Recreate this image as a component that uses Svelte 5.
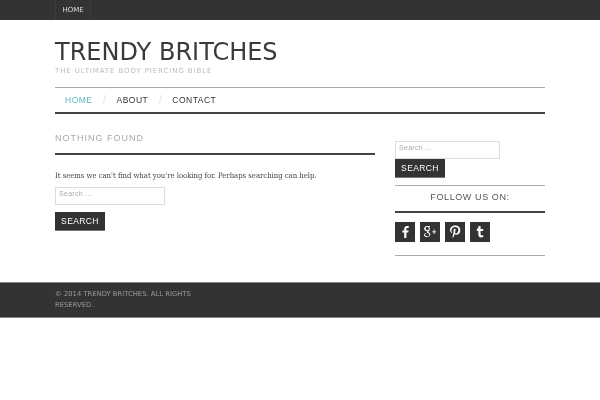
<script>
  const nav = ["Home", "About", "Contact"];
</script>

<div class="page">
  <div class="topbar">
    <div class="wrap">
      <a class="top-link" href="#top">Home</a>
    </div>
  </div>

  <div class="wrap">
    <header class="masthead">
      <h1>Trendy Britches</h1>
      <p class="tagline">The Ultimate Body Piercing Bible</p>
    </header>

    <nav class="mainnav">
      {#each nav as item, i}
        {#if i > 0}<span class="sep">/</span>{/if}
        <a href="#top" class:current={i === 0}>{item}</a>
      {/each}
    </nav>

    <div class="columns">
      <main class="content">
        <h2 class="page-title">Nothing Found</h2>
        <p class="message">It seems we can't find what you're looking for. Perhaps searching can help.</p>
        <form class="search stacked">
          <input type="search" placeholder="Search ..." />
          <button type="button">Search</button>
        </form>
      </main>

      <aside class="sidebar">
        <form class="search">
          <input type="search" placeholder="Search ..." />
          <button type="button">Search</button>
        </form>
        <h3 class="follow">Follow Us On:</h3>
        <div class="social">
          <a href="#top" aria-label="Facebook">
            <svg viewBox="0 0 20 20"><path d="M11.4 16V10.6h1.9l.3-2.2h-2.2V7.1c0-.6.2-1 1.1-1h1.2V4.1c-.3 0-.9-.1-1.7-.1-1.700 0-2.800 1-2.800 2.900v1.500H7.300v2.200h1.900V16z" /></svg>
          </a>
          <a href="#top" aria-label="Google Plus">
            <svg viewBox="0 0 20 20"><path d="M9.900 4H7.200C5.300 4 4.200 5.300 4.200 6.700c0 1.400 1 2.400 2.400 2.400h.4c-.1.300-.2.500-.2.700 0 .4.200.7.400.9-1.600.1-3.200.8-3.200 2.300 0 1.200 1.300 2.100 3 2.100 2 0 3.300-1.300 3.300-2.500 0-1-.5-1.500-1.200-2-.5-.4-.7-.6-.7-.9 0-.7 1.500-1.100 1.500-2.800 0-.8-.3-1.400-.9-1.800h.9zM7.200 4.700c.9 0 1.500.9 1.600 1.900.1.900-.4 1.700-1.300 1.700S5.900 7.400 5.800 6.400c-.1-.9.500-1.700 1.400-1.700zm.3 6.200c1.100.4 1.800.9 1.800 1.800 0 1-.8 1.600-2 1.600-1.400 0-2.300-.7-2.300-1.700s1.100-1.700 2.500-1.700zM13.700 7.600v1.800h-1.800v.9h1.800v1.800h.9v-1.800h1.800v-.9h-1.800V7.600z" /></svg>
          </a>
          <a href="#top" aria-label="Pinterest">
            <svg viewBox="0 0 20 20"><path d="M10.300 3.500C7.400 3.500 5 5.400 5 8c0 1.300.7 2.600 1.800 3 .3.100.4-.3.300-.6-.5-.6-.7-1.200-.7-2 0-1.900 1.600-3.500 3.800-3.500 1.900 0 3.200 1.200 3.200 2.900 0 2-1 3.700-2.200 3.700-.7 0-1.300-.6-1.100-1.400.2-.9.600-1.800.6-2.400 0-.6-.3-1-.9-1-.7 0-1.300.7-1.300 1.700 0 .6.200 1.100.2 1.100l-.9 3.700c-.2.900-.1 1.900 0 3.100.5-.7 1-1.700 1.300-2.600l.5-1.900c.3.500 1 .9 1.800.9 2.400 0 3.900-2.100 3.900-4.800 0-2.400-2.100-4.400-5-4.400z" /></svg>
          </a>
          <a href="#top" aria-label="Tumblr">
            <svg viewBox="0 0 20 20"><path d="M8.600 4h2v2.900h2.600v2h-2.600v3.200c0 .9.300 1.400 1.200 1.400.5 0 .9-.1 1.400-.4v2c-.6.300-1.300.4-2 .4-1.900 0-2.800-1-2.800-2.800V8.900H6.800V7.300c1-.4 1.700-1.700 1.800-3.300z" /></svg>
          </a>
        </div>
      </aside>
    </div>
  </div>

  <footer class="footer">
    <div class="wrap">
      <p>© 2014 Trendy Britches. All Rights Reserved.</p>
    </div>
  </footer>
</div>

<style>
  :global(body) {
    margin: 0;
    background: #fff;
    font-family: "DejaVu Sans", sans-serif;
  }

  .page {
    will-change: transform;
  }

  .wrap {
    width: 490px;
    margin: 0 auto;
  }

  .topbar {
    height: 20px;
    background: #333;
  }

  .top-link {
    display: block;
    box-sizing: border-box;
    width: 36px;
    height: 20px;
    line-height: 20px;
    text-align: center;
    font-size: 7px;
    color: #ddd;
    text-transform: uppercase;
    text-decoration: none;
    border: solid #3c3c3c;
    border-width: 0 1px;
  }

  .masthead {
    padding-top: 20px;
  }

  h1 {
    margin: 0;
    font-size: 24px;
    font-weight: 400;
    line-height: 25px;
    color: #3a3a3a;
    text-transform: uppercase;
  }

  .tagline {
    margin: 1px 0 0;
    font-size: 7px;
    line-height: 11px;
    letter-spacing: .9px;
    color: #bbb;
    text-transform: uppercase;
  }

  .mainnav {
    display: flex;
    align-items: center;
    height: 23px;
    margin-top: 10px;
    padding: 0 0 1px 10px;
    border-top: 1px solid #aaa;
    border-bottom: 2px solid #444;
    font-family: "Liberation Sans", sans-serif;
  }

  .mainnav a {
    font-size: 8.500px;
    letter-spacing: .5px;
    color: #333;
    text-transform: uppercase;
    text-decoration: none;
  }

  .mainnav a.current {
    color: #5bb8c0;
  }

  .sep {
    width: 24px;
    text-align: center;
    font-size: 10px;
    color: #ddd;
  }

  .columns {
    display: flex;
    justify-content: space-between;
    padding-top: 19px;
  }

  .content {
    width: 320px;
  }

  .page-title {
    margin: 0;
    padding-bottom: 9px;
    border-bottom: 2px solid #444;
    font-family: "Liberation Sans", sans-serif;
    font-size: 9px;
    line-height: 11px;
    font-weight: 400;
    letter-spacing: 1px;
    color: #aaa;
    text-transform: uppercase;
  }

  .message {
    margin: 15px 0 0;
    font-family: "DejaVu Serif", serif;
    font-stretch: condensed;
    font-size: 7.650px;
    line-height: 12px;
    color: #444;
  }

  .search {
    display: flex;
    flex-direction: column;
    align-items: flex-start;
  }

  .stacked {
    margin-top: 5px;
    gap: 7px;
  }

  input {
    box-sizing: border-box;
    width: 110px;
    height: 18px;
    padding: 0 0 5px 3px;
    border: 1px solid #ddd;
    outline: 0;
    font: 7px "Liberation Sans", sans-serif;
    letter-spacing: .3px;
  }

  .sidebar .search input {
    width: 105px;
  }

  input::placeholder {
    color: #aaa;
  }

  button {
    width: 50px;
    height: 19px;
    padding: 0;
    border: 0;
    border-bottom: 1px solid #777;
    background: #333;
    color: #fff;
    font: 8.500px "Liberation Sans", sans-serif;
    letter-spacing: .4px;
    text-transform: uppercase;
  }

  .sidebar {
    width: 150px;
    margin-top: 8px;
  }

  .follow {
    margin: 7px 0 0;
    padding: 6px 0 8px;
    border-top: 1px solid #aaa;
    border-bottom: 2px solid #444;
    font-family: "Liberation Sans", sans-serif;
    text-align: center;
    font-size: 9px;
    line-height: 11px;
    font-weight: 400;
    letter-spacing: .6px;
    color: #555;
    text-transform: uppercase;
  }

  .social {
    display: flex;
    gap: 5px;
    padding: 9px 0 13px;
    border-bottom: 1px solid #aaa;
  }

  .social a {
    display: block;
    width: 20px;
    height: 20px;
    background: #333;
  }

  .social svg {
    display: block;
    width: 20px;
    height: 20px;
    fill: #fff;
  }

  .footer {
    margin-top: 26px;
    height: 34px;
    background: #333;
    border-top: 1px solid #888;
    border-bottom: 1px solid #888;
  }

  .footer p {
    width: 160px;
    margin: 0;
    padding-top: 6px;
    font-size: 6.800px;
    line-height: 11px;
    color: #999;
    text-transform: uppercase;
  }
</style>
